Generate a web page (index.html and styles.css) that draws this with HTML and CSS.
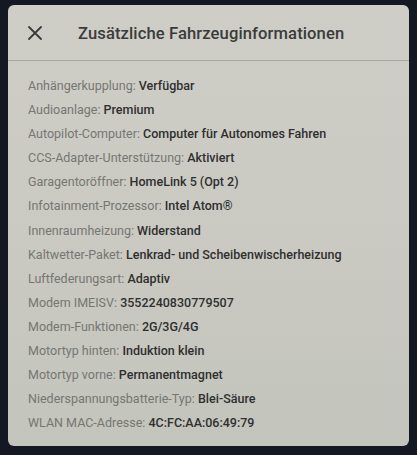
FILE: index.html
```html
<!DOCTYPE html>
<html lang="de">
<head>
<meta charset="utf-8">
<link rel="stylesheet" href="styles.css">
</head>
<body>
<div class="panel">
  <div class="header">
    <svg class="close" width="14" height="14" viewBox="0 0 14 14"><path d="M1 1L13 13M13 1L1 13" stroke="#3a3a3a" stroke-width="1.8" stroke-linecap="round"/></svg>
    <div class="title">Zusätzliche Fahrzeuginformationen</div>
  </div>
  <div class="list">
    <div class="row"><span class="k">Anhängerkupplung:</span> <span class="v">Verfügbar</span></div>
    <div class="row"><span class="k">Audioanlage:</span> <span class="v">Premium</span></div>
    <div class="row"><span class="k">Autopilot-Computer:</span> <span class="v">Computer für Autonomes Fahren</span></div>
    <div class="row"><span class="k">CCS-Adapter-Unterstützung:</span> <span class="v">Aktiviert</span></div>
    <div class="row"><span class="k">Garagentoröffner:</span> <span class="v">HomeLink 5 (Opt 2)</span></div>
    <div class="row"><span class="k">Infotainment-Prozessor:</span> <span class="v">Intel Atom®</span></div>
    <div class="row"><span class="k">Innenraumheizung:</span> <span class="v">Widerstand</span></div>
    <div class="row"><span class="k">Kaltwetter-Paket:</span> <span class="v">Lenkrad- und Scheibenwischerheizung</span></div>
    <div class="row"><span class="k">Luftfederungsart:</span> <span class="v">Adaptiv</span></div>
    <div class="row"><span class="k">Modem IMEISV:</span> <span class="v">3552240830779507</span></div>
    <div class="row"><span class="k">Modem-Funktionen:</span> <span class="v">2G/3G/4G</span></div>
    <div class="row"><span class="k">Motortyp hinten:</span> <span class="v">Induktion klein</span></div>
    <div class="row"><span class="k">Motortyp vorne:</span> <span class="v">Permanentmagnet</span></div>
    <div class="row"><span class="k">Niederspannungsbatterie-Typ:</span> <span class="v">Blei-Säure</span></div>
    <div class="row"><span class="k">WLAN MAC-Adresse:</span> <span class="v">4C:FC:AA:06:49:79</span></div>
  </div>
</div>
</body>
</html>
```
FILE: styles.css
```css
html, body {
  margin: 0;
  padding: 0;
}
body {
  width: 417px;
  height: 455px;
  background: #141822;
  overflow: hidden;
  font-family: Roboto, "Liberation Sans", sans-serif;
}
.panel {
  margin: 5px 0 0 8px;
  width: 401px;
  height: 441px;
  border-radius: 6px;
  background: linear-gradient(180deg, #cecec7 0%, #cacac2 50%, #c3c4bb 100%);
  overflow: hidden;
}
.header {
  height: 54px;
  border-bottom: 1px solid #a9a9a2;
  display: flex;
  align-items: center;
  padding-left: 20px;
  padding-top: 1px;
}
.close {
  display: block;
  flex: none;
}
.title {
  margin-left: 36px;
  font-size: 16.6px;
  font-weight: 500;
  color: #3b3b3b;
  letter-spacing: 0.1px;
}
.list {
  padding: 13px 0 0 20px;
}
.row {
  height: 24.1px;
  line-height: 24px;
  font-size: 12.5px;
  white-space: nowrap;
}
.k {
  color: #767672;
}
.v {
  color: #2f2f2f;
  font-weight: 500;
}
```
